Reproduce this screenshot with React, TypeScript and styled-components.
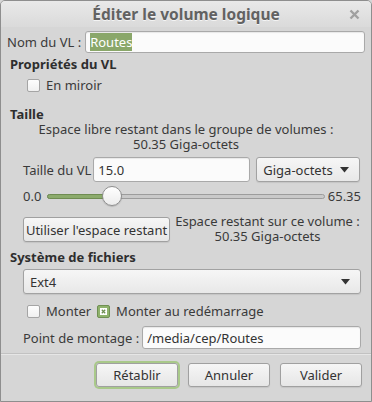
import React from "react";
import styled, { createGlobalStyle } from "styled-components";

const Global = createGlobalStyle`
  html, body {
    margin: 0;
    padding: 0;
    background: #d6d6d6;
  }
  * { box-sizing: border-box; }
`;

const Window = styled.div`
  width: 372px;
  height: 402px;
  background: #d6d6d6;
  border: 1px solid #8e8e8e;
  border-radius: 5px 5px 0 0;
  font-family: "Noto Sans", "Open Sans", sans-serif;
  font-size: 13px;
  color: #3a3a3a;
  display: flex;
  flex-direction: column;
  overflow: hidden;
`;

const TitleBar = styled.div`
  height: 26px;
  flex: none;
  display: flex;
  align-items: center;
  justify-content: center;
  position: relative;
  background: linear-gradient(#e9e9e9, #dadada);
  font-weight: bold;
  font-size: 15.5px;
  color: #626262;
  text-shadow: 0 1px 0 #f4f4f4;
`;

const Close = styled.svg`
  position: absolute;
  right: 11px;
  top: 8px;
`;

const Body = styled.div`
  display: flex;
  flex-direction: column;
  padding: 3px 6px 0 6px;
`;

const Row = styled.div<{ $mt?: number; $h: number; $indent?: number }>`
  display: flex;
  align-items: center;
  margin-top: ${(p) => p.$mt ?? 0}px;
  height: ${(p) => p.$h}px;
  padding-left: ${(p) => p.$indent ?? 0}px;
  flex: none;
`;

const Heading = styled.div<{ $mt: number }>`
  font-weight: bold;
  color: #2e2e2e;
  margin-top: ${(p) => p.$mt}px;
  padding-left: 3px;
  height: 16px;
  line-height: 16px;
`;

const Label = styled.span<{ $gap?: number }>`
  white-space: nowrap;
  margin-right: ${(p) => p.$gap ?? 4}px;
`;

const Input = styled.div<{ $w?: number }>`
  height: 100%;
  flex: ${(p) => (p.$w ? "none" : "1")};
  width: ${(p) => (p.$w ? p.$w + "px" : "auto")};
  background: #fbfbfb;
  border: 1px solid #a9a9a9;
  border-radius: 3px;
  box-shadow: inset 0 1px 1px rgba(0, 0, 0, 0.08);
  display: flex;
  align-items: center;
  padding-left: 4px;
  color: #333;
`;

const Selected = styled.span`
  background: #8aa76a;
  color: #fff;
`;

const Combo = styled.div<{ $w?: number }>`
  height: 100%;
  flex: ${(p) => (p.$w ? "none" : "1")};
  width: ${(p) => (p.$w ? p.$w + "px" : "auto")};
  background: linear-gradient(#f6f6f6, #e8e8e8);
  border: 1px solid #a2a2a2;
  border-radius: 3px;
  box-shadow: 0 1px 1px rgba(0, 0, 0, 0.08);
  display: flex;
  align-items: center;
  justify-content: space-between;
  padding: 0 10px 0 6px;
  color: #333;
`;

const Arrow = () => (
  <svg width="9" height="6" viewBox="0 0 9 6">
    <path d="M0 0 H9 L4.5 5.5 Z" fill="#333" />
  </svg>
);

const Info = styled.div<{ $mt?: number }>`
  text-align: center;
  margin-top: ${(p) => p.$mt ?? 0}px;
`;

const InfoLine = styled.div`
  height: 15px;
  line-height: 15px;
  white-space: nowrap;
`;

const Box = styled.span<{ $checked?: boolean }>`
  width: 13px;
  height: 13px;
  flex: none;
  border-radius: 2px;
  border: 1px solid ${(p) => (p.$checked ? "#6f8f52" : "#a5a5a5")};
  background: ${(p) => (p.$checked ? "#8fb26c" : "linear-gradient(#fdfdfd, #f0f0f0)")};
  display: flex;
  align-items: center;
  justify-content: center;
  margin-right: 6px;
`;

const Check = ({ checked }: { checked?: boolean }) => (
  <Box $checked={checked}>
    {checked && (
      <svg width="7" height="7" viewBox="0 0 7 7">
        <rect x="0" y="0" width="7" height="7" fill="#fff" />
        <path d="M1.8 1.8 L5.2 5.2 M5.2 1.8 L1.8 5.2" stroke="#6f8f52" strokeWidth="1.3" />
      </svg>
    )}
  </Box>
);

const SliderTrack = styled.div`
  flex: 1;
  height: 5px;
  margin: 0 3px 0 4px;
  border-radius: 3px;
  border: 1px solid #9c9c9c;
  background: #c9c9c9;
  position: relative;
`;

const SliderFill = styled.div`
  margin: -1px 0 0 -1px;
  border: 1px solid #6f8c52;
  border-radius: 3px 0 0 3px;
  background: #8cab6c;
  box-sizing: content-box;
  height: 3px;
`;

const Knob = styled.div`
  position: absolute;
  top: -9px;
  width: 20px;
  height: 20px;
  border-radius: 50%;
  background: linear-gradient(#ffffff, #ececec);
  border: 1px solid #8f8f8f;
  box-shadow: 0 1px 1px rgba(0, 0, 0, 0.15);
`;

const Button = styled.div<{ $w?: number; $default?: boolean }>`
  height: 100%;
  width: ${(p) => (p.$w ? p.$w + "px" : "auto")};
  flex: none;
  display: flex;
  align-items: center;
  justify-content: center;
  padding: 0 5px;
  background: linear-gradient(#f6f6f6, #e6e6e6);
  border: 1px solid #a0a0a0;
  border-radius: 3px;
  box-shadow: ${(p) =>
    p.$default ? "0 0 0 2px #a9c98a" : "0 1px 1px rgba(0, 0, 0, 0.08)"};
  color: #333;
  white-space: nowrap;
`;

const SideInfo = styled(Info)`
  flex: 1;
  align-self: flex-start;
  margin-top: -3px;
`;

const Spacer = styled.span<{ $w: number }>`
  width: ${(p) => p.$w}px;
  flex: none;
`;

const Separator = styled.div`
  height: 1px;
  background: #c2c2c2;
  border-bottom: 1px solid #e6e6e6;
  margin: 4px -6px 0 -6px;
  box-sizing: content-box;
`;

const Actions = styled.div`
  display: flex;
  justify-content: flex-end;
  gap: 10px;
  height: 24px;
  margin-top: 8px;
  padding-right: 3px;
`;

const App: React.FC = () => {
  const value = 15.0;
  const max = 65.35;
  const pct = value / max;
  return (
    <>
      <Global />
      <Window>
        <TitleBar>
          Éditer le volume logique
          <Close width="11" height="11" viewBox="0 0 11 11">
            <path d="M1.5 1.5 L9.5 9.5 M9.5 1.5 L1.5 9.5" stroke="#a0a0a0" strokeWidth="2.4" />
          </Close>
        </TitleBar>
        <Body>
          <Row $mt={1} $h={22}>
            <Label $gap={4}>Nom du VL :</Label>
            <Input>
              <Selected>Routes</Selected>
            </Input>
          </Row>
          <Heading $mt={3}>Propriétés du VL</Heading>
          <Row $mt={5} $h={16} $indent={20}>
            <Check />
            <Label>En miroir</Label>
          </Row>
          <Heading $mt={13}>Taille</Heading>
          <Info>
            <InfoLine>Espace libre restant dans le groupe de volumes :</InfoLine>
            <InfoLine>50.35 Giga-octets</InfoLine>
          </Info>
          <Row $mt={5} $h={25} $indent={16}>
            <Label $gap={2}>Taille du VL</Label>
            <Input $w={157}>15.0</Input>
            <Spacer $w={6} />
            <Combo $w={104}>
              Giga-octets
              <Arrow />
            </Combo>
          </Row>
          <Row $mt={4} $h={20} $indent={16}>
            <Label $gap={2}>0.0</Label>
            <SliderTrack>
              <SliderFill style={{ width: `${pct * 100}%` }} />
              <Knob style={{ left: `calc(${pct * 100}% - 10px)` }} />
            </SliderTrack>
            <Label $gap={4}>65.35</Label>
          </Row>
          <Row $mt={11} $h={25} $indent={16}>
            <Button $w={147}>Utiliser l'espace restant</Button>
            <SideInfo>
              <InfoLine>Espace restant sur ce volume :</InfoLine>
              <InfoLine>50.35 Giga-octets</InfoLine>
            </SideInfo>
          </Row>
          <Heading $mt={7}>Système de fichiers</Heading>
          <Row $mt={4} $h={25} $indent={16} style={{ paddingRight: 4 }}>
            <Combo>
              Ext4
              <Arrow />
            </Combo>
          </Row>
          <Row $mt={9} $h={16} $indent={20}>
            <Check />
            <Label $gap={6}>Monter</Label>
            <Check checked />
            <Label>Monter au redémarrage</Label>
          </Row>
          <Row $mt={7} $h={23} $indent={16} style={{ paddingRight: 4 }}>
            <Label $gap={3}>Point de montage :</Label>
            <Input>/media/cep/Routes</Input>
          </Row>
          <Separator />
          <Actions>
            <Button $w={82} $default>
              Rétablir
            </Button>
            <Button $w={82}>Annuler</Button>
            <Button $w={82}>Valider</Button>
          </Actions>
        </Body>
      </Window>
    </>
  );
};

export default App;
